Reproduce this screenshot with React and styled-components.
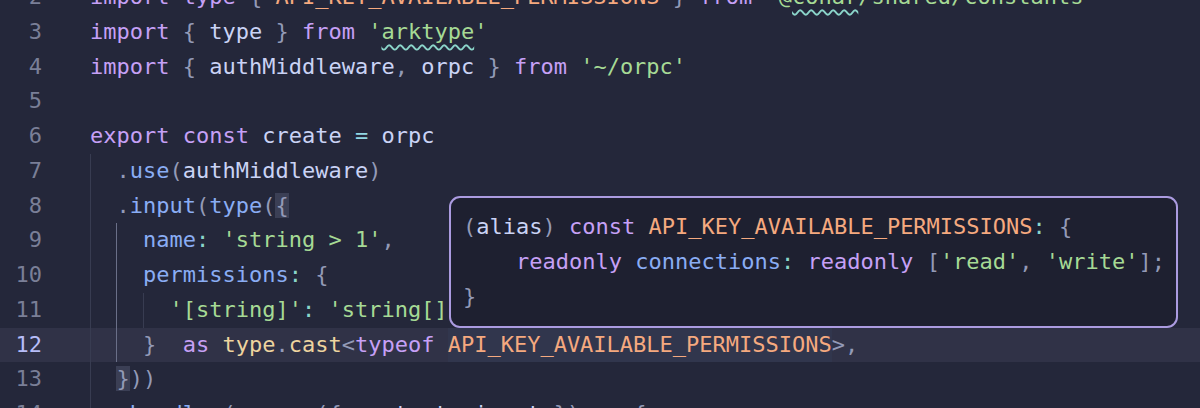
import React from "react";
import styled, { createGlobalStyle } from "styled-components";

const GlobalStyle = createGlobalStyle`
  html, body {
    margin: 0;
    padding: 0;
    background: #24273a;
    overflow: hidden;
  }
`;

const colors = {
  kw: "#c6a0f6",
  con: "#f5a97f",
  str: "#a6da95",
  fn: "#8aadf4",
  txt: "#cad3f5",
  pun: "#939ab7",
  op: "#91d7e3",
  sep: "#8bd5ca",
  ty: "#eed49f",
};

const Editor = styled.div`
  width: 1200px;
  height: 408px;
  overflow: hidden;
  position: relative;
  background: #24273a;
  font-family: "DejaVu Sans Mono", "Liberation Mono", monospace;
  font-size: 22px;
`;

const Lines = styled.div`
  display: flex;
  flex-direction: column;
  margin-top: -20px;
`;

const Row = styled.div`
  display: flex;
  height: 34.75px;
  line-height: 34.75px;
  background: ${({ $active }) => ($active ? "#303247" : "transparent")};
`;

const LineNo = styled.div`
  width: 42px;
  flex: none;
  text-align: right;
  color: ${({ $active }) => ($active ? "#b7bdf8" : "#7a7f97")};
`;

const Code = styled.div`
  margin-left: 48px;
  white-space: pre;
  color: ${colors.txt};
`;

const Indent = styled.span`
  display: inline-block;
  width: 2ch;
  height: 34.75px;
  vertical-align: top;
  box-sizing: border-box;
  border-left: 1px solid ${({ $active }) => ($active ? "#6a6f88" : "#383c51")};
`;

const Tok = styled.span`
  color: ${({ $k }) => colors[$k] || colors.txt};
  ${({ $squiggle }) =>
    $squiggle &&
    `text-decoration: underline wavy #8bd5ca 1.5px; text-underline-offset: 5px;`}
  ${({ $bracket }) => $bracket && `background: #3b3f55;`}
  ${({ $word }) => $word && `background: #31364d; display: inline-block; height: 34.75px;`}
`;

const Hover = styled.div`
  position: absolute;
  left: 449px;
  top: 196px;
  width: 729px;
  height: 132px;
  box-sizing: border-box;
  border: 2px solid #ab9be0;
  border-radius: 11px;
  background: #1e2030;
  padding: 12px 12px;
  display: flex;
  flex-direction: column;
`;

const HoverLine = styled.div`
  height: 34.75px;
  line-height: 34.75px;
  white-space: pre;
  color: ${colors.txt};
`;

const lines = [
  {
    n: 2,
    tokens: [
      ["import", "kw"], [" "], ["type", "kw"], [" "], ["{", "pun"], [" "],
      ["API_KEY_AVAILABLE_PERMISSIONS", "con"], [" "], ["}", "pun"], [" "],
      ["from", "kw"], [" "], ["'@", "str"], ["conar", "str", { squiggle: true }],
      ["/shared/constants'", "str"],
    ],
  },
  {
    n: 3,
    tokens: [
      ["import", "kw"], [" "], ["{", "pun"], [" type "], ["}", "pun"], [" "],
      ["from", "kw"], [" "], ["'", "str"], ["arktype", "str", { squiggle: true }], ["'", "str"],
    ],
  },
  {
    n: 4,
    tokens: [
      ["import", "kw"], [" "], ["{", "pun"], [" authMiddleware"], [",", "pun"],
      [" orpc "], ["}", "pun"], [" "], ["from", "kw"], [" "], ["'~/orpc'", "str"],
    ],
  },
  { n: 5, tokens: [] },
  {
    n: 6,
    tokens: [
      ["export", "kw"], [" "], ["const", "kw"], [" create "], ["=", "op"], [" orpc"],
    ],
  },
  {
    n: 7,
    guides: [false],
    tokens: [[".", "pun"], ["use", "fn"], ["(", "pun"], ["authMiddleware"], [")", "pun"]],
  },
  {
    n: 8,
    guides: [false],
    tokens: [
      [".", "pun"], ["input", "fn"], ["(", "pun"], ["type", "fn"], ["(", "pun"],
      ["{", "pun", { bracket: true }],
    ],
  },
  {
    n: 9,
    guides: [false, true],
    tokens: [["name", "fn"], [":", "sep"], [" "], ["'string > 1'", "str"], [",", "pun"]],
  },
  {
    n: 10,
    guides: [false, true],
    tokens: [["permissions", "fn"], [":", "sep"], [" "], ["{", "pun"]],
  },
  {
    n: 11,
    guides: [false, true, false],
    tokens: [["'[string]'", "str"], [":", "sep"], [" "], ["'string[]'", "str"]],
  },
  {
    n: 12,
    active: true,
    guides: [false, true],
    tokens: [
      ["}", "pun"], ["  "], ["as", "kw"], [" "], ["type", "ty"], [".", "pun"],
      ["cast", "ty"], ["<", "pun"], ["typeof", "kw"], [" "],
      ["API_KEY_AVAILABLE_PERMISSIONS", "con", { word: true }], [">", "pun"], [",", "pun"],
    ],
  },
  {
    n: 13,
    guides: [false],
    tokens: [["}", "pun", { bracket: true }], ["))", "pun"]],
  },
  {
    n: 14,
    guides: [false],
    tokens: [
      [".", "pun"], ["handler", "fn"], ["(", "pun"], ["async", "kw"], [" "],
      ["(", "pun"], ["{", "pun"], [" context"], [",", "pun"], [" input "],
      ["}", "pun"], [")", "pun"], [" "], ["=>", "kw"], [" "], ["{", "pun"],
    ],
  },
];

const hoverLines = [
  [
    ["(", "pun"], ["alias"], [")", "pun"], [" "], ["const", "kw"], [" "],
    ["API_KEY_AVAILABLE_PERMISSIONS", "con"], [":", "sep"], [" "], ["{", "pun"],
  ],
  [
    ["    "], ["readonly", "kw"], [" "], ["connections", "fn"], [":", "sep"], [" "],
    ["readonly", "kw"], [" "], ["[", "pun"], ["'read'", "str"], [",", "pun"], [" "],
    ["'write'", "str"], ["]", "pun"], [";", "pun"],
  ],
  [["}", "pun"]],
];

function Tokens({ tokens }) {
  return tokens.map(([text, kind, opts = {}], i) => (
    <Tok
      key={i}
      $k={kind}
      $squiggle={opts.squiggle}
      $bracket={opts.bracket}
      $word={opts.word}
    >
      {text}
    </Tok>
  ));
}

export default function App() {
  return (
    <>
      <GlobalStyle />
      <Editor>
        <Lines>
          {lines.map((line) => (
            <Row key={line.n} $active={line.active}>
              <LineNo $active={line.active}>{line.n}</LineNo>
              <Code>
                {(line.guides || []).map((g, i) => (
                  <Indent key={i} $active={g} />
                ))}
                <Tokens tokens={line.tokens} />
              </Code>
            </Row>
          ))}
        </Lines>
        <Hover>
          {hoverLines.map((tokens, i) => (
            <HoverLine key={i}>
              <Tokens tokens={tokens} />
            </HoverLine>
          ))}
        </Hover>
      </Editor>
    </>
  );
}
